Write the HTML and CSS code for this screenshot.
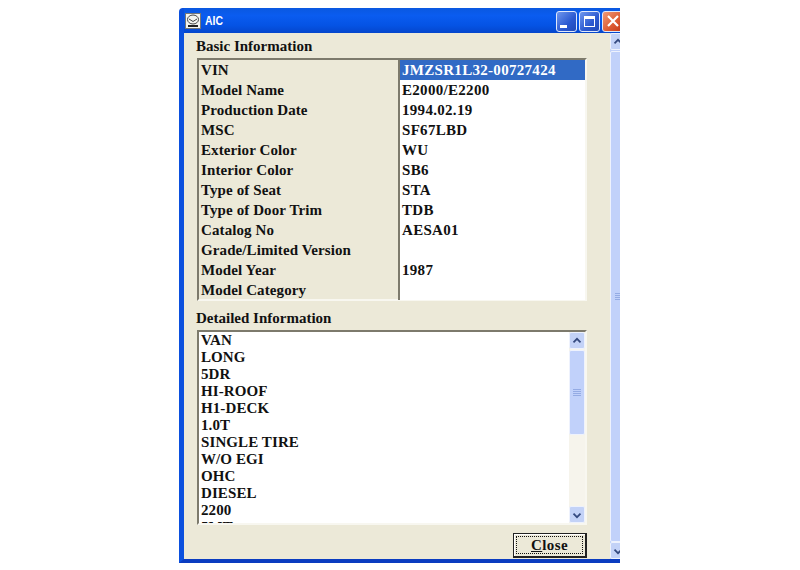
FILE: index.html
```html
<!DOCTYPE html>
<html>
<head>
<meta charset="utf-8">
<title>AIC</title>
<link rel="stylesheet" href="styles.css">
</head>
<body>
<div class="window">
  <div class="titlebar">
    <svg class="appicon" width="16" height="16" viewBox="0 0 16 16"><rect x="0.5" y="0.5" width="15" height="15" fill="#f4f4f0" stroke="#777"/><ellipse cx="8" cy="6.500" rx="5.500" ry="4.500" fill="none" stroke="#444"/><path d="M4 6l4 2.500 4-2.500" fill="none" stroke="#444"/><rect x="3" y="12" width="10" height="2" fill="#222"/></svg>
    <span class="title">AIC</span>
    <div class="winbtns">
      <div class="wbtn wbtn-blue"><span class="glyph-min"></span></div>
      <div class="wbtn wbtn-blue"><span class="glyph-max"></span></div>
      <div class="wbtn wbtn-red"><svg width="18" height="18" viewBox="0 0 18 18"><path d="M4 4l10 10M14 4L4 14" stroke="#fff" stroke-width="2.200"/></svg></div>
    </div>
  </div>
  <div class="client">
    <div class="main">
      <div class="label label-basic">Basic Information</div>
      <div class="table">
        <div class="row"><div class="key">VIN</div><div class="val selected">JMZSR1L32-00727424</div></div>
        <div class="row"><div class="key">Model Name</div><div class="val">E2000/E2200</div></div>
        <div class="row"><div class="key">Production Date</div><div class="val">1994.02.19</div></div>
        <div class="row"><div class="key">MSC</div><div class="val">SF67LBD</div></div>
        <div class="row"><div class="key">Exterior Color</div><div class="val">WU</div></div>
        <div class="row"><div class="key">Interior Color</div><div class="val">SB6</div></div>
        <div class="row"><div class="key">Type of Seat</div><div class="val">STA</div></div>
        <div class="row"><div class="key">Type of Door Trim</div><div class="val">TDB</div></div>
        <div class="row"><div class="key">Catalog No</div><div class="val">AESA01</div></div>
        <div class="row"><div class="key">Grade/Limited Version</div><div class="val"></div></div>
        <div class="row"><div class="key">Model Year</div><div class="val">1987</div></div>
        <div class="row"><div class="key">Model Category</div><div class="val"></div></div>
      </div>
      <div class="label label-detail">Detailed Information</div>
      <div class="listbox">
        <div class="lines">
          <div>VAN</div><div>LONG</div><div>5DR</div><div>HI-ROOF</div><div>H1-DECK</div><div>1.0T</div><div>SINGLE TIRE</div><div>W/O EGI</div><div>OHC</div><div>DIESEL</div><div>2200</div><div>5MT</div>
        </div>
        <div class="sb sb-inner">
          <div class="sb-btn"><svg width="16" height="16" viewBox="0 0 16 16"><path d="M4 9.500l4-4 4 4" fill="none" stroke="#34497f" stroke-width="2"/></svg></div>
          <div class="sb-thumb"><span class="grip"></span></div>
          <div class="sb-track"></div>
          <div class="sb-btn"><svg width="16" height="16" viewBox="0 0 16 16"><path d="M4 6.500l4 4 4-4" fill="none" stroke="#34497f" stroke-width="2"/></svg></div>
        </div>
      </div>
      <div class="actions">
        <button class="close"><span class="focus"><u>C</u>lose</span></button>
      </div>
    </div>
    <div class="sb sb-outer">
      <div class="sb-btn sb-btn-outer"><svg width="16" height="16" viewBox="0 0 16 16"><path d="M4 9.500l4-4 4 4" fill="none" stroke="#34497f" stroke-width="2"/></svg></div>
      <div class="sb-thumb sb-thumb-outer"><span class="grip"></span></div>
      <div class="sb-btn sb-btn-outer"><svg width="16" height="16" viewBox="0 0 16 16"><path d="M4 6.500l4 4 4-4" fill="none" stroke="#34497f" stroke-width="2"/></svg></div>
    </div>
  </div>
</div>
</body>
</html>
```
FILE: styles.css
```css
html, body { margin: 0; padding: 0; background: #fff; }
body { width: 800px; height: 570px; overflow: hidden; font-family: "Liberation Serif", "Times New Roman", serif; font-weight: bold; font-size: 15px; color: #111; }
.window { margin: 8px 0 0 179px; width: 441px; height: 555px; box-sizing: border-box; display: flex; flex-direction: column; background: #0a4fdc; border-left: 5px solid #0b50de; border-bottom: 4px solid #0a3cc0; border-radius: 4px 0 0 0; box-shadow: inset 1px 0 0 #2a6cf0; overflow: hidden; }
.titlebar { height: 25px; flex: none; display: flex; align-items: center; background: linear-gradient(#0a58e0 0, #0a5cf0 30%, #0553e4 70%, #0546cc 100%); margin-left: -5px; padding-left: 6px; }
.appicon { flex: none; }
.title { margin-left: 4px; color: #fff; font-family: "Liberation Sans", Arial, sans-serif; font-size: 13px; font-weight: bold; transform: scaleX(.8); transform-origin: left; }
.winbtns { margin-left: auto; display: flex; gap: 2px; margin-right: -3px; margin-top: 1px; }
.wbtn { width: 21px; height: 21px; box-sizing: border-box; border: 1px solid #dfe8fb; border-radius: 3px; display: flex; align-items: center; justify-content: center; position: relative; }
.wbtn-blue { background: linear-gradient(135deg, #6f97ee, #2a58d0 60%, #2049b8); }
.wbtn-red { background: linear-gradient(135deg, #ee9a78, #dc5a32 60%, #c53a18); }
.glyph-min { width: 7px; height: 3px; background: #fff; align-self: flex-end; margin: 0 6px 3px 0; }
.glyph-max { width: 11px; height: 11px; box-sizing: border-box; border: 1px solid #fff; border-top-width: 3px; }
.client { flex: 1; display: flex; background: #ece9d8; min-height: 0; }
.main { flex: 1; min-width: 0; display: flex; flex-direction: column; padding-left: 13px; padding-right: 23px; }
.label { font-size: 15px; line-height: 16px; margin-left: -1px; }
.label-basic { margin-top: 5px; }
.label-detail { margin-top: 9px; }
.table { margin-top: 4px; height: 243px; box-sizing: border-box; background: #ece9d8; border-left: 2px solid #7d7a6c; border-top: 2px solid #7d7a6c; border-right: 2px solid #f8f7f0; border-bottom: 2px solid #f8f7f0; }
.row { height: 20px; display: flex; line-height: 21px; letter-spacing: .1px; }
.key { width: 201px; flex: none; box-sizing: border-box; padding-left: 2px; border-right: 2px solid #7d7a6c; }
.val { flex: 1; background: #fff; padding-left: 2px; letter-spacing: .3px; }
.selected { background: #316ac5; color: #fff; }
.listbox { margin-top: 4px; height: 195px; box-sizing: border-box; display: flex; background: #fff; border-left: 2px solid #7d7a6c; border-top: 2px solid #7d7a6c; border-right: 2px solid #f8f7f0; border-bottom: 2px solid #f8f7f0; }
.lines { flex: 1; overflow: hidden; padding: 0 0 0 2px; line-height: 17px; letter-spacing: .1px; }
.sb { flex: none; width: 16px; display: flex; flex-direction: column; background: #f6f4ec; }
.sb-btn { height: 17px; flex: none; box-sizing: border-box; background: #c3d2f7; border: 1px solid #eef2fd; border-radius: 2px; display: flex; align-items: center; justify-content: center; }
.sb-thumb { height: 85px; flex: none; margin-top: 1px; box-sizing: border-box; background: #c1d1fa; border: 1px solid #eef2fd; border-radius: 2px; display: flex; align-items: center; justify-content: center; }
.sb-track { flex: 1; }
.grip { width: 8px; height: 7px; background: repeating-linear-gradient(#94abe4 0 1px, transparent 1px 2px); }
.actions { margin-top: 8px; display: flex; justify-content: flex-end; }
.close { width: 74px; height: 25px; padding: 2px; box-sizing: border-box; background: #ece9d8; border: 1px solid #222; border-right-width: 2px; border-bottom-width: 2px; box-shadow: inset 1px 1px 0 #fff; font: inherit; color: #111; letter-spacing: .4px; }
.focus { display: flex; align-items: center; justify-content: center; height: 100%; border: 1px dotted #111; box-sizing: border-box; }
.sb-outer { width: 10px; overflow: hidden; background: #c1d1fa; }
.sb-btn-outer { width: 16px; flex: none; }
.sb-thumb-outer { flex: 1; height: auto; width: 16px; margin: 1px 0 0 0; justify-content: flex-start; padding-left: 4px; }
```
